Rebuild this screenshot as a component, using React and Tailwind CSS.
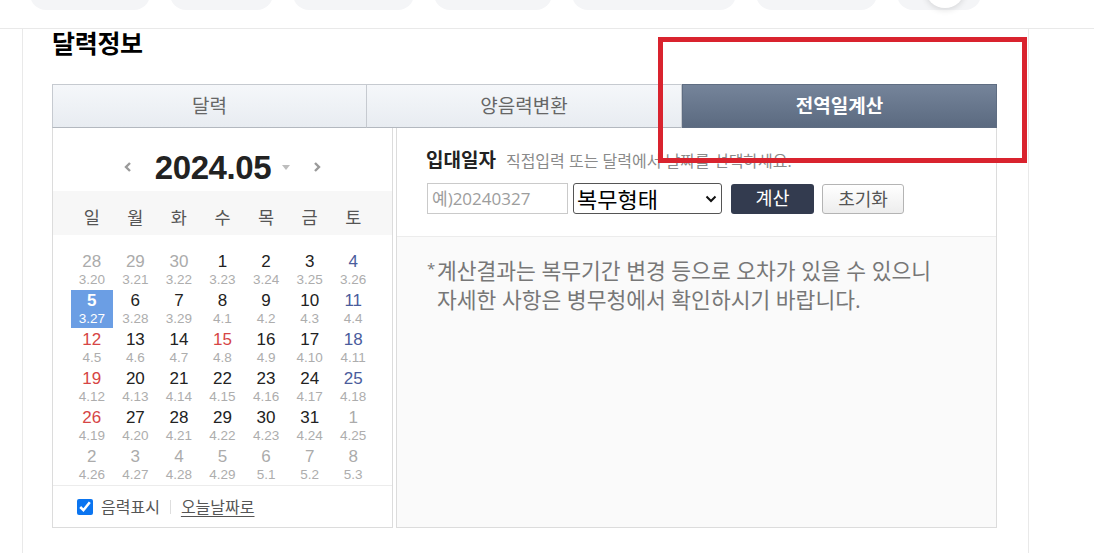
const weeks = [
  [['28', '3.20', 'o'], ['29', '3.21', 'o'], ['30', '3.22', 'o'], ['1', '3.23', 'n'], ['2', '3.24', 'n'], ['3', '3.25', 'n'], ['4', '3.26', 'sat']],
  [['5', '3.27', 'sel'], ['6', '3.28', 'n'], ['7', '3.29', 'n'], ['8', '4.1', 'n'], ['9', '4.2', 'n'], ['10', '4.3', 'n'], ['11', '4.4', 'sat']],
  [['12', '4.5', 'sun'], ['13', '4.6', 'n'], ['14', '4.7', 'n'], ['15', '4.8', 'sun'], ['16', '4.9', 'n'], ['17', '4.10', 'n'], ['18', '4.11', 'sat']],
  [['19', '4.12', 'sun'], ['20', '4.13', 'n'], ['21', '4.14', 'n'], ['22', '4.15', 'n'], ['23', '4.16', 'n'], ['24', '4.17', 'n'], ['25', '4.18', 'sat']],
  [['26', '4.19', 'sun'], ['27', '4.20', 'n'], ['28', '4.21', 'n'], ['29', '4.22', 'n'], ['30', '4.23', 'n'], ['31', '4.24', 'n'], ['1', '4.25', 'o']],
  [['2', '4.26', 'o'], ['3', '4.27', 'o'], ['4', '4.28', 'o'], ['5', '4.29', 'o'], ['6', '5.1', 'o'], ['7', '5.2', 'o'], ['8', '5.3', 'o']],
];

const dayColor = {
  o: 'text-[#ababab]',
  n: 'text-[#222]',
  sat: 'text-[#4a5c9c]',
  sun: 'text-[#d64545]',
  sel: 'text-white font-bold',
};

function TopNav() {
  const pills = [120, 103, 121, 118, 164, 121];
  return (
    <div className="h-[29px] border-b border-[#e9e9e9] overflow-hidden">
      <div className="flex gap-[20px] pl-[30px] -mt-[34px]">
        {pills.map((w, i) => (
          <div key={i} className="h-[44px] rounded-[16px] bg-[#f4f5f7]" style={{ width: w }} />
        ))}
        <div className="h-[44px] w-[84px] rounded-[16px] bg-[#f4f5f7] pl-[28px] pt-[2px]">
          <div className="w-[40px] h-[40px] rounded-full bg-white shadow-[0_2px_6px_rgba(0,0,0,0.12)]" />
        </div>
      </div>
    </div>
  );
}

function Chevron({ dir }) {
  return (
    <svg width="8" height="12" viewBox="0 0 8 12">
      <polyline
        points={dir === 'left' ? '6,2 2,6 6,10' : '2,2 6,6 2,10'}
        fill="none"
        stroke="#9a9a9a"
        strokeWidth="2.4"
      />
    </svg>
  );
}

function Calendar() {
  return (
    <div className="w-[341px] h-[400px] border-x border-b border-[#dcdcdc] flex flex-col">
      <div className="h-[63px] flex items-center justify-center pt-[14px]">
        <span className="mr-[23px]"><Chevron dir="left" /></span>
        <span className="font-['Liberation_Sans',sans-serif] font-bold text-[33px] leading-none text-[#222] tracking-[-0.4px] mt-[2px]">2024.05</span>
        <svg width="8" height="5" viewBox="0 0 8 5" className="ml-[11px] mt-[2px]">
          <polygon points="0,0 8,0 4,5" fill="#bdbdbd" />
        </svg>
        <span className="ml-[23px]"><Chevron dir="right" /></span>
      </div>
      <div className="h-[44px] bg-[#f7f7f7] pl-[17px] pt-[12px]">
        <div className="grid grid-cols-7 w-[305px] items-center text-[17.5px] leading-[28px] text-[#555]">
          {['일', '월', '화', '수', '목', '금', '토'].map((d) => (
            <div key={d} className="text-center">{d}</div>
          ))}
        </div>
      </div>
      <div className="pt-[16px] pl-[17px] font-['Liberation_Sans',sans-serif]">
        <div className="grid grid-cols-7 w-[305px]">
          {weeks.flat().map(([day, lunar, type], i) => (
            <div key={i} className="h-[39px] px-[1px]">
              <div className={`h-[38px] flex flex-col items-center pt-[1px] ${type === 'sel' ? 'bg-[#6b9ee4]' : ''}`}>
                <span className={`text-[17px] leading-[20px] ${dayColor[type]}`}>{day}</span>
                <span className={`text-[13.5px] leading-[16px] ${type === 'sel' ? 'text-white' : 'text-[#adadad]'}`}>{lunar}</span>
              </div>
            </div>
          ))}
        </div>
      </div>
      <div className="mt-auto h-[42px] border-t border-[#ececec] flex items-center pl-[24px] text-[16px] text-[#555]">
        <input type="checkbox" defaultChecked readOnly className="w-[16px] h-[16px] accent-[#0b75f0] m-0" />
        <span className="ml-[8px]">음력표시</span>
        <span className="mx-[10px] w-px h-[14px] bg-[#dedede]" />
        <span className="underline underline-offset-[3px]">오늘날짜로</span>
      </div>
    </div>
  );
}

function Discharge() {
  return (
    <div className="flex-1 h-[400px] border-x border-b border-[#dcdcdc] flex flex-col">
      <div className="h-[109px] border-b border-[#ececec] pl-[29px] pt-[20px]">
        <div className="flex items-baseline leading-[24px]">
          <span className="text-[19px] font-bold text-[#222]">입대일자</span>
          <span className="ml-[10px] text-[16px] text-[#8a8a8a]">직접입력 또는 달력에서 날짜를 선택하세요.</span>
        </div>
        <div className="flex items-center mt-[10px] ml-[1px]">
          <input
            placeholder="예)20240327"
            className="w-[141px] h-[31px] border border-[#cacaca] px-[4px] text-[17px] placeholder:text-[#9d9d9d] outline-none"
          />
          <div className="relative ml-[5px]">
            <select className="appearance-none w-[149px] h-[31px] border border-[#555] rounded-[3px] pl-[3px] text-[22px] text-black bg-white leading-none">
              <option>복무형태</option>
            </select>
            <svg width="12" height="8" viewBox="0 0 12 8" className="absolute right-[5px] top-[12px] pointer-events-none">
              <polyline points="1.5,1.5 6,6 10.5,1.5" fill="none" stroke="#111" strokeWidth="2" />
            </svg>
          </div>
          <button className="ml-[9px] w-[83px] h-[30px] rounded-[3px] bg-[#333b4f] text-white text-[18.5px] leading-none">계산</button>
          <button className="ml-[8px] w-[82px] h-[30px] rounded-[3px] border border-[#b4b4b4] bg-linear-to-b from-white to-[#ededed] text-[#555] text-[18px] leading-none">초기화</button>
        </div>
      </div>
      <div className="flex-1 bg-[#fafafa] pl-[30px] pt-[19px] text-[21.5px] leading-[29px] text-[#777]">
        <div className="flex">
          <span className="w-[10px] text-[15px] leading-[24px]">*</span>
          <p>
            계산결과는 복무기간 변경 등으로 오차가 있을 수 있으니
            <br />
            자세한 사항은 병무청에서 확인하시기 바랍니다.
          </p>
        </div>
      </div>
    </div>
  );
}

export default function App() {
  return (
    <div className="w-[1094px] h-[553px] overflow-hidden bg-white font-['Open_Sans','Noto_Sans_CJK_KR',sans-serif]">
      <TopNav />
      <div className="relative ml-[22px] w-[1007px] h-[524px] border-x border-[#e9e9e9] pl-[29px]">
        <div className="h-[55px]">
          <h2 className="text-[25px] font-bold leading-[28px] text-black tracking-[-0.3px]">달력정보</h2>
        </div>
        <div className="w-[945px] grid grid-cols-3 h-[44px] text-[19px]">
          <div className="flex items-center justify-center border border-[#c6cad0] border-b-[#b3b8bf] bg-linear-to-b from-[#f5f7fa] to-[#e8ecf1] text-[#666]">달력</div>
          <div className="flex items-center justify-center border-y border-r border-[#c6cad0] border-b-[#b3b8bf] bg-linear-to-b from-[#f5f7fa] to-[#e8ecf1] text-[#666]">양음력변환</div>
          <div className="flex items-center justify-center bg-linear-to-b from-[#75849a] to-[#5b6a80] border border-[#5f6d82] text-white font-bold">전역일계산</div>
        </div>
        <div className="flex gap-[3px] w-[945px]">
          <Calendar />
          <Discharge />
        </div>
        <div className="absolute left-[635px] top-[8px] w-[369px] h-[126px] border-[5px] border-[#d9232e]" />
      </div>
    </div>
  );
}
